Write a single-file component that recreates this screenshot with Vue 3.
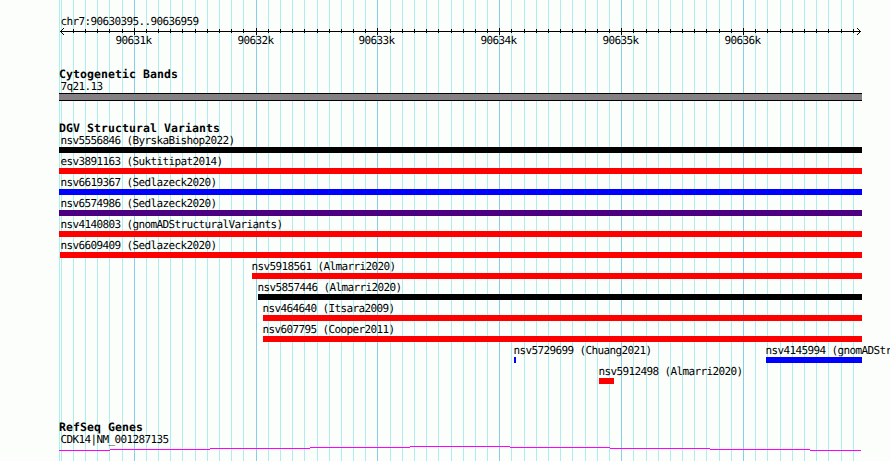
<script setup>
const region = { chrom: 'chr7', start: 90630395, end: 90636959 }
const left = 60
const scale = 800 / (region.end - region.start + 1)

const toX = (pos) => Math.round(left + (pos - region.start) * scale)

const ticks = []
for (let pos = 90630400; pos <= 90636900; pos += 100) {
    ticks.push({ pos, x: toX(pos), major: pos % 1000 === 0 })
}
const majorTicks = ticks.filter((t) => t.major)

// every lane holds the features that fit next to each other
const lanes = [
    [{ name: 'nsv5556846 (ByrskaBishop2022)', from: 59, to: 862, color: '#000000', text: 60 }],
    [{ name: 'esv3891163 (Suktitipat2014)', from: 59, to: 862, color: '#ff0000', text: 60 }],
    [{ name: 'nsv6619367 (Sedlazeck2020)', from: 59, to: 862, color: '#0000ff', text: 60 }],
    [{ name: 'nsv6574986 (Sedlazeck2020)', from: 59, to: 862, color: '#4b0082', text: 60 }],
    [{ name: 'nsv4140803 (gnomADStructuralVariants)', from: 59, to: 862, color: '#ff0000', text: 60 }],
    [{ name: 'nsv6609409 (Sedlazeck2020)', from: 60, to: 862, color: '#ff0000', text: 60 }],
    [{ name: 'nsv5918561 (Almarri2020)', from: 252, to: 862, color: '#ff0000', text: 251 }],
    [{ name: 'nsv5857446 (Almarri2020)', from: 258, to: 862, color: '#000000', text: 257 }],
    [{ name: 'nsv464640 (Itsara2009)', from: 263, to: 862, color: '#ff0000', text: 262 }],
    [{ name: 'nsv607795 (Cooper2011)', from: 263, to: 862, color: '#ff0000', text: 262 }],
    [
        { name: 'nsv5729699 (Chuang2021)', from: 514, to: 516, color: '#0000ff', text: 513 },
        { name: 'nsv4145994 (gnomADStructuralVariants)', from: 766, to: 862, color: '#0000ff', text: 765 },
    ],
    [{ name: 'nsv5912498 (Almarri2020)', from: 599, to: 614, color: '#ff0000', text: 598 }],
]

// the intron line climbs one pixel per segment and comes back down
const intron = [
    [59, 110, 4], [110, 210, 3], [210, 310, 2], [310, 410, 1], [410, 510, 0],
    [510, 610, 1], [610, 710, 2], [710, 810, 3], [810, 861, 4],
]
</script>

<template>
    <div class="browser">
        <svg class="grid" width="890" height="461" shape-rendering="crispEdges">
            <rect class="minor" x="59" y="0" width="1" height="461" />
            <rect v-for="t in ticks" :key="t.pos" :class="t.major ? 'major' : 'minor'" :x="t.x" y="0" width="1" height="461" />
        </svg>

        <header class="ruler">
            <div class="label">{{ region.chrom }}:{{ region.start }}..{{ region.end }}</div>
            <svg class="axis" width="890" height="7" shape-rendering="crispEdges">
                <rect x="60" y="3" width="801" height="1" />
                <rect v-for="t in ticks.slice(1)" :key="t.pos" :x="t.x" :y="t.major ? 0 : 1" width="1" :height="t.major ? 7 : 4" />
                <rect x="61" y="2" width="1" height="3" />
                <rect x="62" y="1" width="1" height="1" />
                <rect x="62" y="5" width="1" height="1" />
                <rect x="63" y="0" width="1" height="1" />
                <rect x="63" y="6" width="1" height="1" />
                <rect x="859" y="2" width="1" height="3" />
                <rect x="858" y="1" width="1" height="1" />
                <rect x="858" y="5" width="1" height="1" />
                <rect x="857" y="0" width="1" height="1" />
                <rect x="857" y="6" width="1" height="1" />
            </svg>
            <div class="numbers">
                <span v-for="t in majorTicks" :key="t.pos" :style="{ marginLeft: t.x - 19 + 'px' }">{{ t.pos / 1000 }}k</span>
            </div>
        </header>

        <section class="track cyto">
            <h2>Cytogenetic Bands</h2>
            <div class="label">7q21.13</div>
            <div class="band"></div>
        </section>

        <section class="track variants">
            <h2>DGV Structural Variants</h2>
            <div v-for="(lane, i) in lanes" :key="i" class="lane">
                <div v-for="f in lane" :key="f.name" class="feature">
                    <div class="name" :style="{ paddingLeft: f.text + 'px' }">{{ f.name }}</div>
                    <div class="bar" :style="{ marginLeft: f.from + 'px', width: f.to - f.from + 'px', background: f.color }"></div>
                </div>
            </div>
        </section>

        <section class="track genes">
            <h2>RefSeq Genes</h2>
            <div class="label">CDK14|NM_001287135</div>
            <svg class="intron" width="890" height="5" shape-rendering="crispEdges">
                <rect v-for="s in intron" :key="s[0]" :x="s[0]" :y="s[2]" :width="s[1] - s[0]" height="1" />
            </svg>
        </section>
    </div>
</template>

<style>
    body {
        margin: 0;
        background: #fcfefc;
    }
</style>

<style scoped>
    .browser {
        position: relative;
        width: 890px;
        height: 461px;
        overflow: hidden;
        background: #fcfefc;
        color: #000;
        font: 11px/12px "DejaVu Sans Mono", "Liberation Mono", monospace;
        letter-spacing: -0.622px;
        text-rendering: geometricPrecision;
        white-space: nowrap;
    }

    .grid {
        position: absolute;
        top: 0;
        left: 0;
    }

    .minor {
        fill: #afeeee;
    }

    .major {
        fill: #87ceeb;
    }

    .ruler,
    .track {
        position: relative;
    }

    .ruler {
        height: 51px;
        padding-top: 16px;
    }

    .label {
        height: 12px;
        padding-left: 60.4px;
    }

    .axis {
        display: block;
    }

    .numbers {
        display: grid;
        height: 12px;
    }

    .numbers span {
        grid-area: 1 / 1;
        padding-left: 0.4px;
    }

    h2 {
        height: 14px;
        margin: 0;
        padding-left: 59px;
        font-size: 11.5px;
        font-weight: bold;
        line-height: 14px;
        letter-spacing: 0.077px;
    }

    .cyto {
        height: 54px;
    }

    .band {
        box-sizing: border-box;
        width: 803px;
        height: 8px;
        margin-left: 59px;
        background: #848084;
        border: solid #000;
        border-width: 1px 0;
    }

    .variants {
        height: 299px;
    }

    .lane {
        display: grid;
        grid-template-columns: 890px;
        height: 18px;
        margin-bottom: 3px;
    }

    .feature {
        grid-area: 1 / 1;
    }

    .name {
        height: 12px;
        text-indent: 0.4px;
    }

    .bar {
        height: 6px;
    }

    .intron {
        display: block;
        fill: #ff00ff;
    }
</style>
